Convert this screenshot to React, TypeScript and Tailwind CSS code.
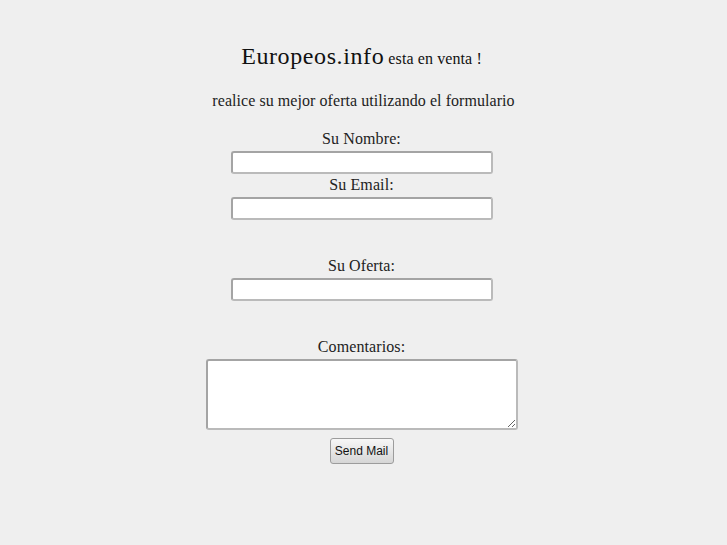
import React from "react";

const serif = { fontFamily: '"Liberation Serif", "Times New Roman", serif' };

function Label({ text, mt }: { text: string; mt: string }) {
  return (
    <div className={`h-[18px] text-[16px] leading-[18px] tracking-[0.1px] text-[#222] ${mt}`}>{text}</div>
  );
}

function Input({ mt }: { mt: string }) {
  return (
    <input
      type="text"
      className={`block h-[23px] w-[262px] rounded-[3px] border-2 border-[#a9a9a9] bg-white outline-none ${mt}`}
      style={{ borderTopColor: "#a4a4a4", borderLeftColor: "#a4a4a4", borderBottomColor: "#bababa", borderRightColor: "#bababa" }}
    />
  );
}

export default function App() {
  return (
    <div className="min-h-[545px] w-full bg-[#efefef] pr-[4px]" style={serif}>
      <div className="flex flex-col items-center pt-[42px]">
        <div className="h-[28px] text-[24px] leading-[28px] text-[#111]">
          <span className="tracking-[0.6px]">Europeos.info</span>
          <span className="text-[16px] tracking-[0.1px]"> esta en venta !</span>
        </div>
        <div className="mt-[22px] h-[18px] pl-[4px] text-[16px] leading-[18px] tracking-[0.06px] text-[#222]">
          realice su mejor oferta utilizando el formulario
        </div>
        <Label text="Su Nombre:" mt="mt-[20px]" />
        <Input mt="mt-[3px]" />
        <Label text="Su Email:" mt="mt-[2px]" />
        <Input mt="mt-[3px]" />
        <Label text="Su Oferta:" mt="mt-[37px]" />
        <Input mt="mt-[3px]" />
        <Label text="Comentarios:" mt="mt-[37px]" />
        <textarea
          className="mt-[3px] block h-[71px] w-[312px] rounded-[3px] border-2 border-[#a9a9a9] bg-white outline-none"
          style={{ borderTopColor: "#a4a4a4", borderLeftColor: "#a4a4a4", borderBottomColor: "#bababa", borderRightColor: "#bababa" }}
        />
        <button
          className="mt-[8px] h-[26px] w-[64px] rounded-[3px] border border-[#9c9c9c] bg-gradient-to-b from-[#f7f7f7] to-[#d6d6d6] text-[12px] text-[#111]"
          style={{ fontFamily: '"Liberation Sans", Arial, sans-serif' }}
        >
          Send Mail
        </button>
      </div>
    </div>
  );
}
